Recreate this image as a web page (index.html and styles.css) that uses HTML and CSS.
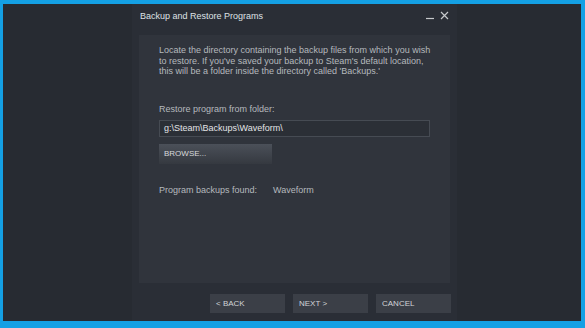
FILE: index.html
```html
<!DOCTYPE html>
<html lang="en">

<head>
    <meta charset="UTF-8">
    <title>Backup and Restore Programs</title>
    <link rel="stylesheet" href="styles.css">
</head>

<body>
    <div class="screen">
        <div class="dialog">
            <div class="titlebar">
                <span class="title">Backup and Restore Programs</span>
                <div class="controls">
                    <svg class="ctl" width="9" height="9" viewBox="0 0 9 9"><path d="M0 7.5h8" stroke="#c6c9cc" stroke-width="1.2"/></svg>
                    <svg class="ctl" width="9" height="9" viewBox="0 0 9 9"><path d="M1 1l7 7M8 1l-7 7" stroke="#c6c9cc" stroke-width="1.2"/></svg>
                </div>
            </div>

            <div class="panel">
                <p class="intro">Locate the directory containing the backup files from which you wish to restore. If you've saved your backup to Steam's default location, this will be a folder inside the directory called 'Backups.'</p>
                <p class="label">Restore program from folder:</p>
                <div class="path-input">g:\Steam\Backups\Waveform\</div>
                <div class="browse-btn">BROWSE...</div>
                <p class="found">Program backups found:<span class="found-name">Waveform</span></p>
            </div>

            <div class="footer">
                <div class="btn">&lt; BACK</div>
                <div class="btn">NEXT &gt;</div>
                <div class="btn">CANCEL</div>
            </div>
        </div>
    </div>
</body>

</html>
```

FILE: styles.css
```css
body {
    margin: 0;
    width: 585px;
    height: 328px;
    background-color: #14a0e4;
    font-family: 'Liberation Sans', Arial, sans-serif;
    overflow: hidden;
}

.screen {
    margin: 4px 4px 0 3px;
    height: 317px;
    background-color: #272b32;
    display: flex;
}

.dialog {
    margin-left: 129px;
    width: 325px;
    background-color: #2a2e36;
    display: flex;
    flex-direction: column;
}

.titlebar {
    height: 23px;
    display: flex;
    align-items: center;
    justify-content: space-between;
    padding: 0 8px 0 8px;
}

.title {
    font-size: 9px;
    color: #dfe2e5;
}

.controls {
    display: flex;
    gap: 5px;
    align-items: center;
}

.panel {
    margin: 8px 7px 0 7px;
    height: 248px;
    box-sizing: border-box;
    padding: 10px 10px 0 20px;
    background-color: #30343c;
}

.panel p {
    margin: 0;
    font-size: 9px;
    line-height: 10.5px;
    color: #b5b9bd;
}

.label {
    margin-top: 27px !important;
}

.path-input {
    margin-top: 6px;
    width: 271px;
    height: 17px;
    box-sizing: border-box;
    border: 1px solid #464b53;
    background-color: #2b2f36;
    color: #e2e4e6;
    font-size: 9px;
    line-height: 15px;
    padding-left: 4px;
}

.browse-btn {
    margin-top: 7px;
    width: 113px;
    height: 20px;
    box-sizing: border-box;
    background: linear-gradient(#4b5059, #353940);
    color: #d8dadc;
    font-size: 8px;
    line-height: 20px;
    padding-left: 5px;
}

.found {
    margin-top: 21px !important;
}

.found-name {
    margin-left: 16px;
}

.footer {
    display: flex;
    justify-content: flex-end;
    gap: 8px;
    margin-top: 11px;
    padding-right: 6px;
}

.btn {
    width: 75px;
    height: 19px;
    box-sizing: border-box;
    background-color: #3b3f47;
    color: #d2d4d7;
    font-size: 8px;
    line-height: 19px;
    padding-left: 6px;
}
```
